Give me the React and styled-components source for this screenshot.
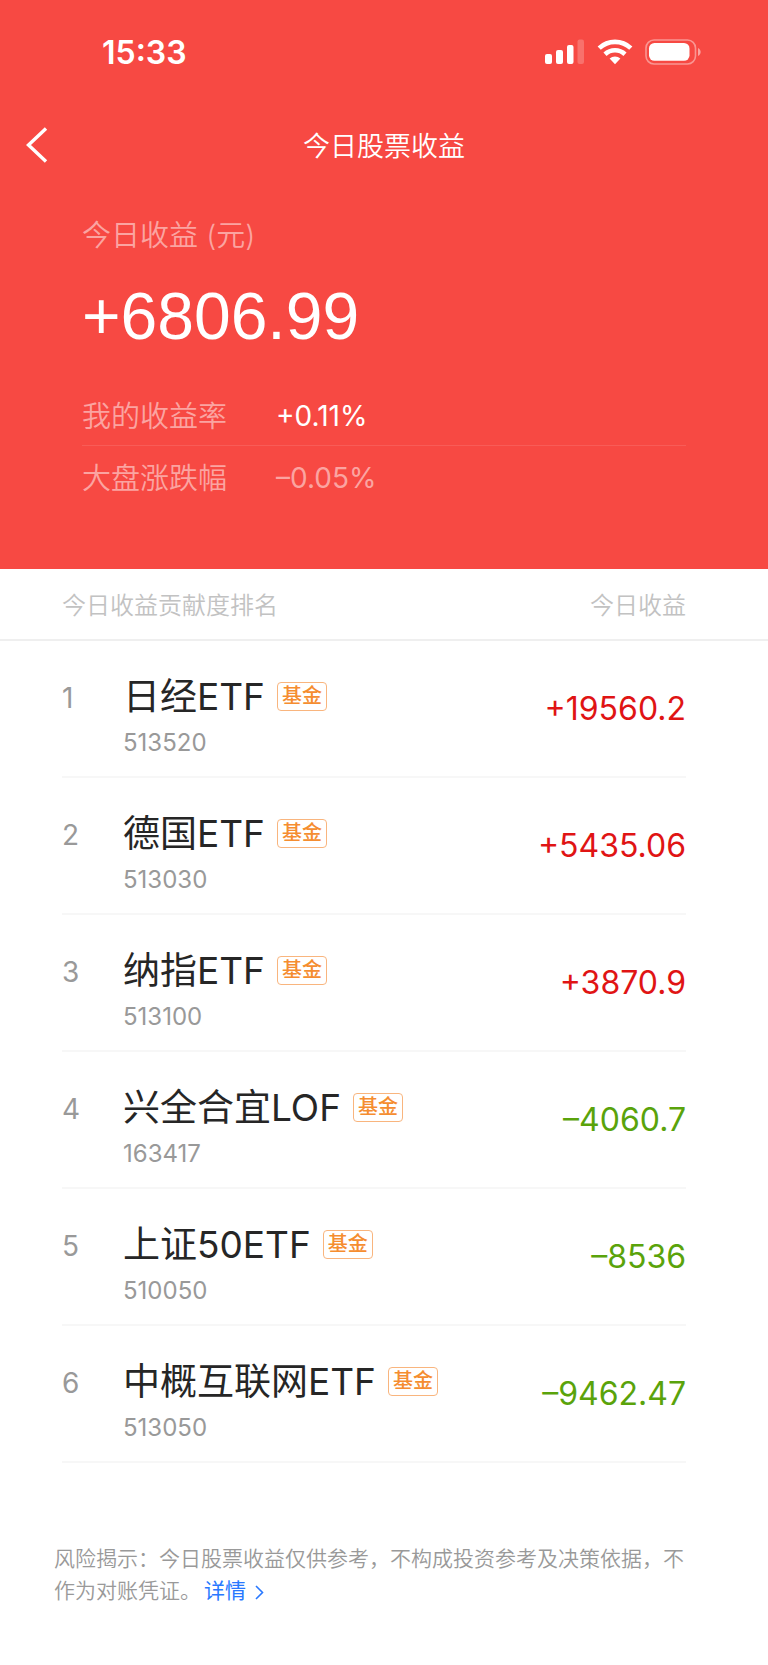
import React from "react";
import styled, { createGlobalStyle } from "styled-components";

const GlobalStyle = createGlobalStyle`
  * { box-sizing: border-box; }
  body {
    margin: 0;
    background: #fff;
    color: #262626;
    font-family: Inter, "Noto Sans CJK SC", sans-serif;
  }
`;

const Page = styled.div`
  min-height: 100vh;
  background: #fff;
`;

const Hero = styled.header`
  background: #f74943;
  color: #fff;
`;

const StatusBar = styled.div`
  display: flex;
  align-items: center;
  justify-content: space-between;
  height: 104px;
  padding: 0 66px 0 102px;
`;

const Clock = styled.time`
  padding-top: 2px;
  font-size: 32px;
  font-weight: 600;
  line-height: 40px;
`;

const StatusIcons = styled.div`
  display: flex;
  align-items: center;
  gap: 12px;
  svg { display: block; }
`;

const NavBar = styled.nav`
  display: grid;
  grid-template-columns: 74px 1fr 74px;
  align-items: center;
  height: 82px;
`;

const BackButton = styled.button`
  display: flex;
  align-items: center;
  height: 82px;
  padding: 0 0 0 25px;
  border: 0;
  background: none;
  color: inherit;
  cursor: pointer;
`;

const Title = styled.h1`
  margin: 0;
  padding-top: 4px;
  font-size: 27px;
  font-weight: 350;
  line-height: 40px;
  text-align: center;
`;

const Summary = styled.section`
  padding: 30px 82px 61px;
`;

const SummaryLabel = styled.div`
  color: #fba4a1;
  font-size: 29px;
  font-weight: 350;
  line-height: 40px;
`;

const Total = styled.div`
  margin: 20px 0 28px;
  font-family: "Liberation Sans", sans-serif;
  font-size: 66px;
  line-height: 80px;
`;

const Rates = styled.dl`
  margin: 0;
`;

const Rate = styled.div`
  display: grid;
  grid-template-columns: 194px 1fr;
  align-items: center;
  height: 62px;
  border-bottom: 1px solid transparent;
  &:first-child { border-bottom-color: #f85c57; }
`;

const RateName = styled.dt`
  padding-top: 4px;
  color: #fba4a1;
  font-size: 29px;
  font-weight: 350;
  line-height: 40px;
`;

const RateValue = styled.dd`
  margin: 0;
  padding-top: 2px;
  color: ${(p) => (p.$muted ? "#fba4a1" : "#fff")};
  font-size: 28px;
  line-height: 40px;
`;

const Ranking = styled.table`
  display: block;
  width: 100%;
`;

const RankingHead = styled.thead`
  display: block;
  border-bottom: 2px solid #efefef;
`;

const HeadRow = styled.tr`
  display: flex;
  align-items: center;
  justify-content: space-between;
  height: 70px;
  padding: 0 82px 0 62px;
`;

const HeadCell = styled.th`
  padding: 4px 0 0;
  color: #c2c2c2;
  font-size: 24px;
  font-weight: 350;
  line-height: 36px;
`;

const RankingBody = styled.tbody`
  display: block;
  padding: 0 82px 0 62px;
`;

const FundRow = styled.tr`
  display: grid;
  grid-template-columns: 61px 1fr auto;
  border-bottom: 2px solid #f7f7f7;
`;

const Rank = styled.td`
  padding: 32px 0 0;
  color: #999;
  font-size: 28px;
  line-height: 50px;
`;

const Fund = styled.td`
  padding: 30px 0 11px;
`;

const NameLine = styled.div`
  display: flex;
  align-items: center;
  gap: 12px;
  height: 50px;
`;

const FundName = styled.span`
  padding-top: 2px;
  font-size: 37px;
  line-height: 50px;
  white-space: nowrap;
`;

const Tag = styled.span`
  padding: 0 4px;
  border: 1px solid #f9b57e;
  border-radius: 4px;
  color: #f58d30;
  font-size: 20px;
  font-weight: 500;
  line-height: 27px;
`;

const Code = styled.div`
  color: #999;
  font-size: 24px;
  line-height: 44px;
`;

const Amount = styled.td`
  align-self: center;
  padding: 0;
  color: ${(p) => (p.$down ? "#5aa30b" : "#e01414")};
  font-size: 32px;
`;

const Notice = styled.footer`
  padding: 80px 68px 58px 54px;
  color: #999;
  font-size: 21px;
  font-weight: 350;
  line-height: 32px;
`;

const DetailLink = styled.a`
  color: #2878ff;
  font-weight: 400;
  text-decoration: none;
  margin-left: 3px;
  svg { margin-left: 9px; vertical-align: -2px; }
`;

const funds = [
  { name: "日经ETF", code: "513520", amount: "+19560.2" },
  { name: "德国ETF", code: "513030", amount: "+5435.06" },
  { name: "纳指ETF", code: "513100", amount: "+3870.9" },
  { name: "兴全合宜LOF", code: "163417", amount: "–4060.7" },
  { name: "上证50ETF", code: "510050", amount: "–8536" },
  { name: "中概互联网ETF", code: "513050", amount: "–9462.47" },
];

function SignalIcon() {
  return (
    <svg width="40" height="26" viewBox="0 0 40 26" fill="#fff" aria-hidden="true">
      <rect x="0" y="15" width="7" height="10" rx="2" />
      <rect x="11" y="11" width="7" height="14" rx="2" />
      <rect x="22" y="6" width="6.5" height="19" rx="2" />
      <rect x="32.5" y="0.5" width="6.5" height="24.5" rx="2" opacity="0.22" />
    </svg>
  );
}

function WifiIcon() {
  return (
    <svg width="36" height="26" viewBox="0 0 36 26" aria-hidden="true">
      <g fill="none" stroke="#fff" strokeWidth="4.6">
        <path d="M2.2 9.2A23 23 0 0 1 33.8 9.2" />
        <path d="M8 15.2A14.6 14.6 0 0 1 28 15.2" />
      </g>
      <path d="M12.6 19.6A8.2 8.2 0 0 1 23.4 19.6L18 25.2Z" fill="#fff" />
    </svg>
  );
}

function BatteryIcon() {
  return (
    <svg width="57" height="26" viewBox="0 0 57 26" aria-hidden="true">
      <rect x="1" y="1" width="49.5" height="24" rx="8" fill="none" stroke="#fff" strokeWidth="1.6" opacity="0.42" />
      <rect x="4" y="4" width="40.5" height="17.8" rx="5.5" fill="#fff" />
      <path d="M53 9C56.5 10.5 56.5 15.5 53 17Z" fill="#fff" opacity="0.5" />
    </svg>
  );
}

export default function App() {
  return (
    <Page>
      <GlobalStyle />
      <Hero>
        <StatusBar>
          <Clock>15:33</Clock>
          <StatusIcons>
            <SignalIcon />
            <WifiIcon />
            <BatteryIcon />
          </StatusIcons>
        </StatusBar>
        <NavBar>
          <BackButton type="button" aria-label="返回">
            <svg width="24" height="38" viewBox="0 0 24 38" fill="none" stroke="#fff" strokeWidth="3.4">
              <path d="M21 2.5L3.5 19L21 35.5" />
            </svg>
          </BackButton>
          <Title>今日股票收益</Title>
        </NavBar>
        <Summary>
          <SummaryLabel>今日收益 (元)</SummaryLabel>
          <Total>+6806.99</Total>
          <Rates>
            <Rate>
              <RateName>我的收益率</RateName>
              <RateValue>+0.11%</RateValue>
            </Rate>
            <Rate>
              <RateName>大盘涨跌幅</RateName>
              <RateValue $muted>–0.05%</RateValue>
            </Rate>
          </Rates>
        </Summary>
      </Hero>
      <main>
        <Ranking>
          <RankingHead>
            <HeadRow>
              <HeadCell scope="col">今日收益贡献度排名</HeadCell>
              <HeadCell scope="col">今日收益</HeadCell>
            </HeadRow>
          </RankingHead>
          <RankingBody>
            {funds.map((fund, i) => (
              <FundRow key={fund.code}>
                <Rank>{i + 1}</Rank>
                <Fund>
                  <NameLine>
                    <FundName>{fund.name}</FundName>
                    <Tag>基金</Tag>
                  </NameLine>
                  <Code>{fund.code}</Code>
                </Fund>
                <Amount $down={fund.amount.startsWith("–")}>{fund.amount}</Amount>
              </FundRow>
            ))}
          </RankingBody>
        </Ranking>
      </main>
      <Notice>
        风险揭示：今日股票收益仅供参考，不构成投资参考及决策依据，不作为对账凭证。
        <DetailLink href="#details">
          详情
          <svg width="9" height="15" viewBox="0 0 9 15" fill="none" stroke="currentColor" strokeWidth="1.6" aria-hidden="true">
            <path d="M1 1L7.5 7.5L1 14" />
          </svg>
        </DetailLink>
      </Notice>
    </Page>
  );
}
